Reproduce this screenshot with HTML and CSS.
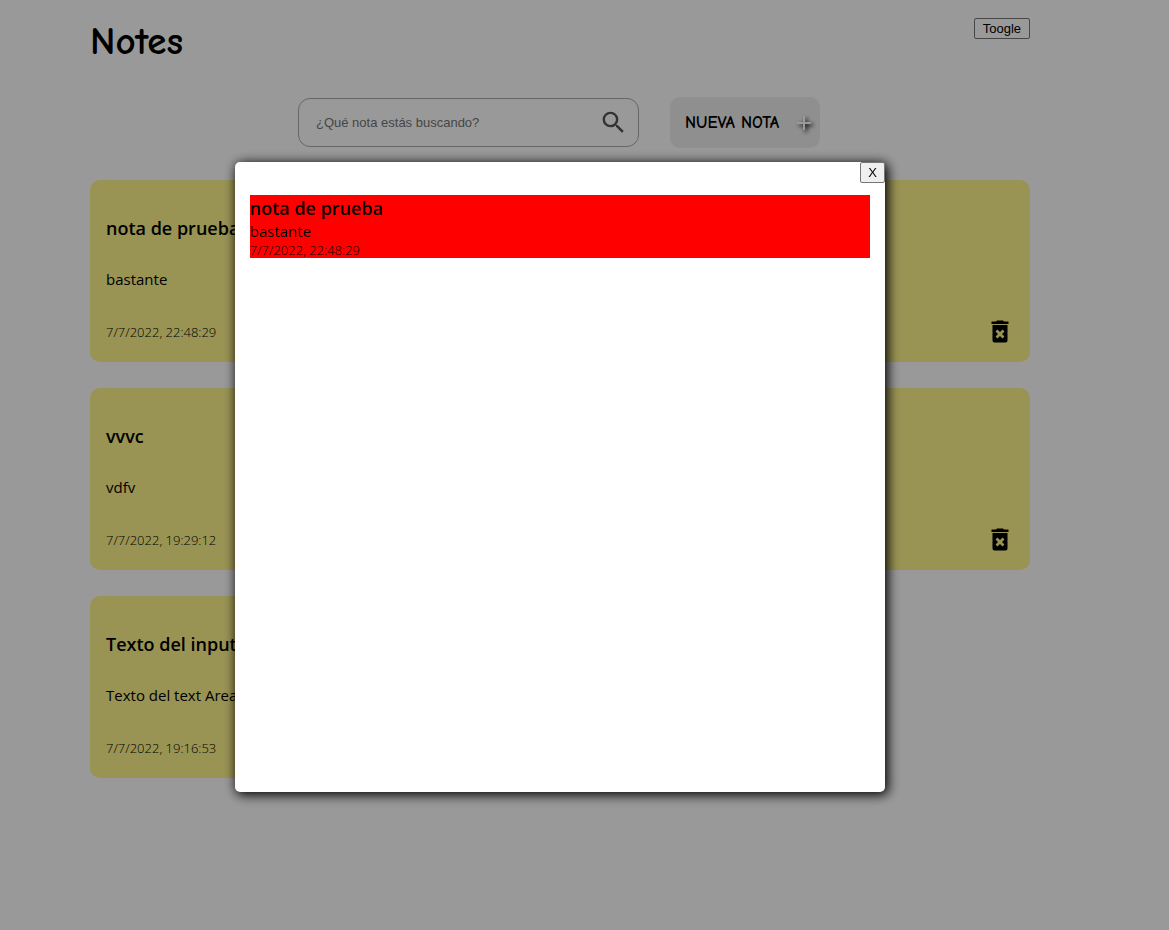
FILE: index.html
```
<!DOCTYPE html>
<html lang="es">
<head>
<meta charset="utf-8">
<meta name="viewport" content="width=device-width, initial-scale=1">
<title>Notes</title>
<link rel="stylesheet" href="styles.css">
</head>
<body>
<div class="page">
  <header class="header">
    <h1 class="title">Notes</h1>
    <button class="plain-button toggle" type="button">Toogle</button>
  </header>
  <div class="toolbar">
    <label class="search">
      <input class="search-input" type="search" placeholder="¿Qué nota estás buscando?" aria-label="Buscar nota">
      <svg class="search-icon" viewBox="0 0 24 24" aria-hidden="true"><path d="M15.5 14h-.79l-.28-.27A6.47 6.47 0 0 0 16 9.500 6.500 6.500 0 1 0 9.500 16c1.610 0 3.090-.590 4.230-1.570l.270.280v.790l5 4.990L20.490 19l-4.990-5zm-6 0C7.010 14 5 11.990 5 9.500S7.010 5 9.500 5 14 7.010 14 9.500 11.990 14 9.500 14z"/></svg>
    </label>
    <button class="new-note" type="button">NUEVA NOTA
      <svg class="plus-icon" viewBox="0 0 14 14" aria-hidden="true"><path d="M7 0v14M0 7h14"/></svg>
    </button>
  </div>
  <main class="notes">
    <article class="note">
      <h2 class="note-title">nota de prueba</h2>
      <p class="note-text">bastante</p>
      <footer class="note-footer"><time class="note-date">7/7/2022, 22:48:29</time></footer>
    </article>
    <article class="note">
      <footer class="note-footer">
        <button class="delete" type="button" aria-label="Eliminar"><svg class="trash" viewBox="0 0 18 24" aria-hidden="true"><path fill-rule="evenodd" d="M5 1.500l1-1h6l1 1h4.500v2.500h-17V1.500zM1.500 5h15v15.500a2 2 0 0 1-2 2h-11a2 2 0 0 1-2-2zM4.500 11.500l2.500 2.500-2.500 2.500 2 2L9 16l2.500 2.500 2-2-2.500-2.500 2.500-2.500-2-2L9 12 6.500 9.500z"/></svg></button>
      </footer>
    </article>
    <article class="note">
      <h2 class="note-title">vvvc</h2>
      <p class="note-text">vdfv</p>
      <footer class="note-footer"><time class="note-date">7/7/2022, 19:29:12</time></footer>
    </article>
    <article class="note">
      <footer class="note-footer">
        <button class="delete" type="button" aria-label="Eliminar"><svg class="trash" viewBox="0 0 18 24" aria-hidden="true"><path fill-rule="evenodd" d="M5 1.500l1-1h6l1 1h4.500v2.500h-17V1.500zM1.500 5h15v15.500a2 2 0 0 1-2 2h-11a2 2 0 0 1-2-2zM4.500 11.500l2.500 2.500-2.500 2.500 2 2L9 16l2.500 2.500 2-2-2.500-2.500 2.500-2.500-2-2L9 12 6.500 9.500z"/></svg></button>
      </footer>
    </article>
    <article class="note">
      <h2 class="note-title">Texto del input</h2>
      <p class="note-text">Texto del text Area</p>
      <footer class="note-footer"><time class="note-date">7/7/2022, 19:16:53</time></footer>
    </article>
  </main>
</div>
<div class="overlay">
  <section class="modal" role="dialog" aria-modal="true" aria-labelledby="detail-title">
    <div class="modal-bar"><button class="plain-button" type="button" aria-label="Cerrar">X</button></div>
    <article class="detail">
      <h2 class="detail-title" id="detail-title">nota de prueba</h2>
      <p class="detail-text">bastante</p>
      <time class="detail-date">7/7/2022, 22:48:29</time>
    </article>
  </section>
</div>
</body>
</html>
```
FILE: styles.css
```
* {
  box-sizing: border-box;
}

body {
  margin: 0;
  background: #fff;
  color: #000;
  font-family: "Segoe UI", "Open Sans", sans-serif;
  font-size: 15px;
}

h1, h2, p {
  margin: 0;
}

.page {
  max-width: 1120px;
  padding: 18px 90px;
}

.header {
  display: flex;
  justify-content: space-between;
  align-items: flex-start;
  height: 79px;
}

.title {
  font-family: "Comic Neue", "Comic Sans MS", Lato, sans-serif;
  font-size: 39px;
  font-weight: 700;
  line-height: 48px;
}

.plain-button {
  height: 21px;
  padding: 0 7px;
  border: 1px solid #767676;
  border-radius: 2px;
  background: #efefef;
  color: #000;
  font: 13px/19px "Liberation Sans", Arial, sans-serif;
}

.toggle {
  padding: 0 8px;
  background: #fff;
}

.toolbar {
  display: flex;
  justify-content: center;
  align-items: center;
  gap: 31px;
  margin-bottom: 32px;
  padding-right: 2px;
}

.search {
  display: flex;
  align-items: center;
  width: 341px;
  height: 49px;
  padding: 0 14px 0 17px;
  border: 1px solid #aaa;
  border-radius: 12px;
}

.search-input {
  flex: 1;
  min-width: 0;
  padding: 0;
  border: 0;
  outline: 0;
  background: none;
  font: 13px/16px "Liberation Sans", Arial, sans-serif;
}

.search-input::placeholder {
  color: #757575;
}

.search-icon {
  width: 29px;
  height: 29px;
  margin-right: -4px;
  fill: #555;
}

.new-note {
  display: flex;
  align-items: center;
  justify-content: space-between;
  width: 150px;
  height: 51px;
  padding: 0 9px 0 15px;
  border: 0;
  border-radius: 10px;
  background: #efefef;
  color: #000;
  font: 700 17px/20px "Comic Neue", "Comic Sans MS", Lato, sans-serif;
  white-space: nowrap;
}

.plus-icon {
  width: 14px;
  height: 14px;
  overflow: visible;
  fill: none;
  stroke: #fff;
  stroke-width: 2;
  filter: drop-shadow(2px 2px 2px #000);
}

.notes {
  display: grid;
  grid-template-columns: 1fr 1fr;
  gap: 26px;
}

.note {
  display: flex;
  flex-direction: column;
  height: 182px;
  padding: 36px 16px 16px;
  border-radius: 10px;
  background: #fff68d;
}

.note-title, .detail-title {
  font-size: 18px;
  font-weight: 600;
  line-height: 25px;
}

.note-text {
  margin-top: 28px;
  line-height: 21px;
}

.note-footer {
  display: flex;
  margin-top: auto;
}

.note-date, .detail-date {
  font-size: 13px;
  font-weight: 300;
  line-height: 17px;
}

.note-date {
  padding-bottom: 5px;
}

.delete {
  display: flex;
  margin-left: auto;
  padding: 2px 5px;
  border: 0;
  background: none;
}

.trash {
  width: 18px;
  height: 24px;
}

.overlay {
  position: fixed;
  inset: 0;
  padding: 162px 49px 0 0;
  background: rgba(0, 0, 0, 0.4);
}

.modal {
  width: 650px;
  max-width: 100%;
  min-height: 630px;
  margin: 0 auto;
  border-radius: 5px;
  background: #fff;
  box-shadow: 2px 2px 12px 1px #000;
}

.modal-bar {
  display: flex;
  justify-content: flex-end;
}

.detail {
  margin: 12px 15px 0;
  background: #f00;
}

.detail-title {
  line-height: 26px;
}

.detail-text {
  line-height: 21px;
}

.detail-date {
  display: block;
  line-height: 16px;
}
```
